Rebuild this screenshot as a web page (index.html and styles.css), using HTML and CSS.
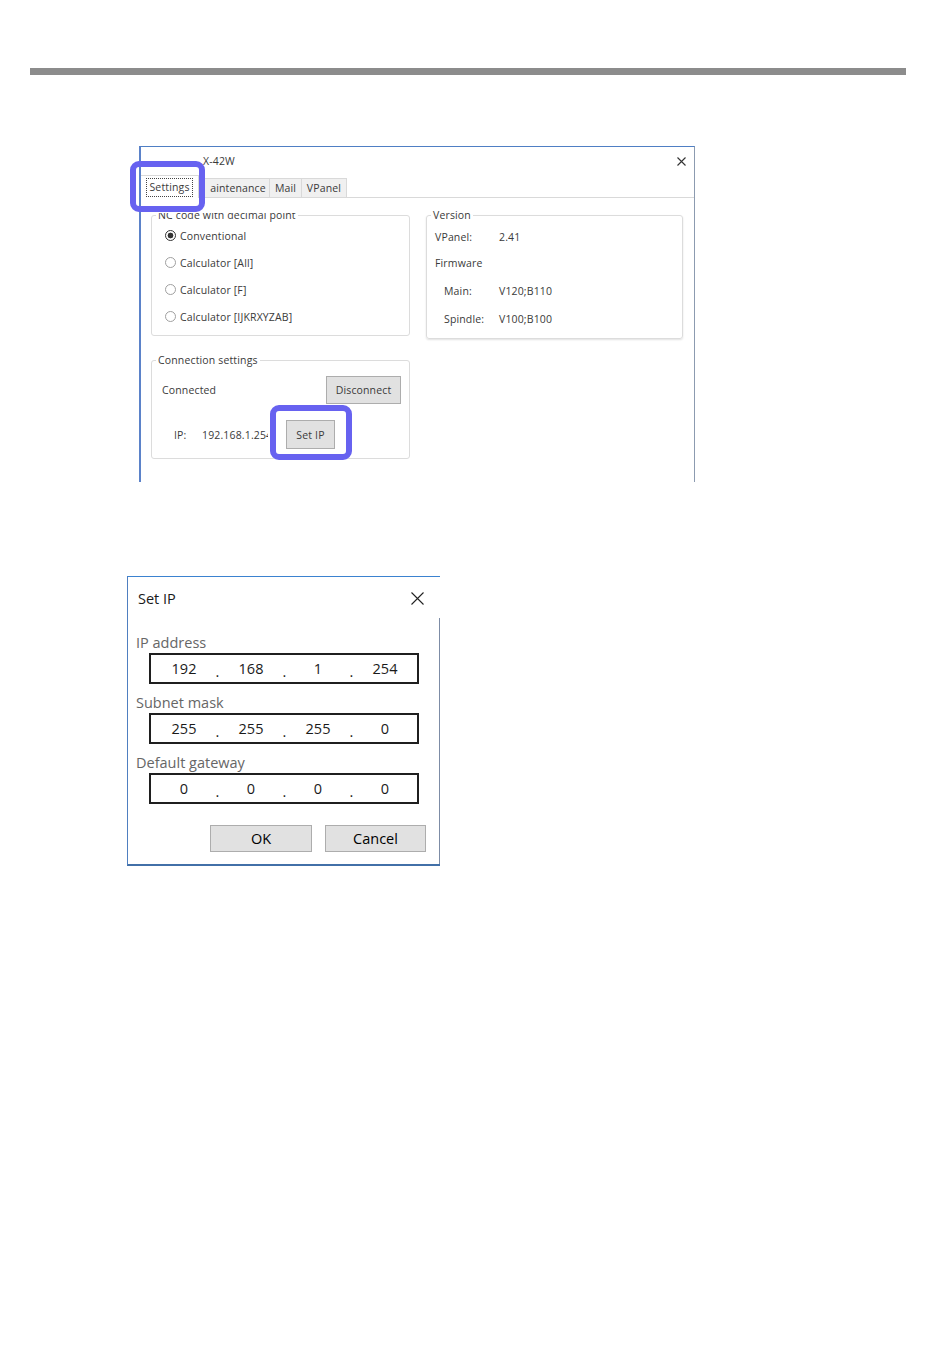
FILE: index.html
```html
<!DOCTYPE html>
<html>
<head>
<meta charset="utf-8">
<link rel="stylesheet" href="styles.css">
</head>
<body>
<div class="rule"></div>

<div class="win">
  <div class="titlebar">
    <span class="wtitle">X-42W</span>
    <svg class="wclose" width="9" height="9" viewBox="0 0 9 9"><path d="M0.5 0.5 L8.5 8.5 M8.5 0.5 L0.5 8.5" stroke="#333" stroke-width="1.1" fill="none"/></svg>
  </div>
  <div class="tabs">
    <div class="tab sel t1"><span class="focus">Settings</span></div>
    <div class="tab t2">aintenance</div>
    <div class="tab t3">Mail</div>
    <div class="tab t4">VPanel</div>
  </div>
  <div class="panel">
    <div class="col">
      <fieldset class="grp g1">
        <legend class="clip">NC code with decimal point</legend>
        <div class="radios">
          <div class="radio"><span class="dot on"></span>Conventional</div>
          <div class="radio"><span class="dot"></span>Calculator [All]</div>
          <div class="radio"><span class="dot"></span>Calculator [F]</div>
          <div class="radio"><span class="dot"></span>Calculator [IJKRXYZAB]</div>
        </div>
      </fieldset>
      <fieldset class="grp g2">
        <legend>Connection settings</legend>
        <div class="conn">
          <div class="crow1"><span>Connected</span><div class="wbtn disc">Disconnect</div></div>
          <div class="crow2"><span class="iplab">IP:</span><span class="ipval">192.168.1.254</span><div class="wbtn setip">Set IP</div></div>
        </div>
      </fieldset>
    </div>
    <fieldset class="grp ver">
      <legend>Version</legend>
      <div class="vgrid">
        <span class="vk">VPanel:</span><span>2.41</span>
        <span class="vk">Firmware</span><span></span>
        <span class="vk ind">Main:</span><span>V120;B110</span>
        <span class="vk ind">Spindle:</span><span>V100;B100</span>
      </div>
    </fieldset>
  </div>
  <div class="mark m1"></div>
  <div class="mark m2"></div>
</div>

<div class="dlg">
  <div class="dhead">
    <span class="dtitle">Set IP</span>
    <svg width="13" height="13" viewBox="0 0 13 13"><path d="M0.5 0.5 L12.5 12.5 M12.5 0.5 L0.5 12.5" stroke="#222" stroke-width="1.1" fill="none"/></svg>
  </div>
  <div class="dbody">
    <div class="flabel">IP address</div>
    <div class="ipbox"><span></span><span>192</span><span class="pt">.</span><span>168</span><span class="pt">.</span><span>1</span><span class="pt">.</span><span>254</span></div>
    <div class="flabel gap">Subnet mask</div>
    <div class="ipbox"><span></span><span>255</span><span class="pt">.</span><span>255</span><span class="pt">.</span><span>255</span><span class="pt">.</span><span>0</span></div>
    <div class="flabel gap">Default gateway</div>
    <div class="ipbox"><span></span><span>0</span><span class="pt">.</span><span>0</span><span class="pt">.</span><span>0</span><span class="pt">.</span><span>0</span></div>
  </div>
  <div class="dbtns">
    <div class="dbtn ok">OK</div>
    <div class="dbtn cancel">Cancel</div>
  </div>
</div>
</body>
</html>
```

FILE: styles.css
```css
body {
  margin: 0;
  background: #fff;
  font-family: "Open Sans", "Noto Sans", sans-serif;
}

.rule {
  margin: 68px 44px 0 30px;
  height: 7px;
  background: #8c8c8c;
}

/* ---------- first window ---------- */
.win {
  position: relative;
  margin: 71px 0 0 139px;
  width: 556px;
  height: 336px;
  box-sizing: border-box;
  border-left: 2px solid #5b82c9;
  border-top: 1px solid #4f7fc4;
  border-right: 1px solid #8c9bb0;
  font-size: 10.5px;
  letter-spacing: 0.15px;
  color: #3a3a3a;
}

.titlebar {
  height: 28px;
  display: flex;
  align-items: center;
  justify-content: space-between;
  padding: 0 8px 0 62px;
}

.wtitle { line-height: 12px; }

.tabs {
  height: 22px;
  display: flex;
  align-items: flex-end;
  border-bottom: 1px solid #d9d9d9;
}

.tab {
  height: 19px;
  box-sizing: border-box;
  border: 1px solid #d9d9d9;
  border-bottom: none;
  background: #f0f0f0;
  display: flex;
  align-items: center;
  justify-content: center;
  margin-left: -1px;
}

.tab.sel {
  height: 23px;
  margin-bottom: -1px;
  margin-left: 0;
  background: #fff;
  border-left: none;
}

.t1 { width: 58px; }
.t2 { width: 72px; padding-left: 8px; }
.t3 { width: 33px; }
.t4 { width: 46px; }

.focus {
  border: 1px dotted #444;
  padding: 2px 2px;
  line-height: 13px;
}

.panel {
  display: flex;
  gap: 16px;
  padding: 10px 0 0 10px;
}

.grp {
  margin: 0;
  padding: 0;
  border: 1px solid #dcdcdc;
  border-radius: 3px;
  box-sizing: border-box;
  min-width: 0;
}

.grp legend {
  margin-left: 4px;
  padding: 0 2px;
  line-height: 14px;
}

.clip { clip-path: inset(5px 0 0 0); }

.g1 { width: 259px; height: 128px; }
.g2 { width: 259px; height: 106px; margin-top: 17px; }
.ver { width: 257px; height: 131px; box-shadow: 0 1px 2px rgba(0,0,0,0.12); }

.radios { padding-top: 0; }

.radio {
  height: 27px;
  display: flex;
  align-items: center;
  gap: 4px;
  padding-left: 13px;
}

.dot {
  width: 11px;
  height: 11px;
  box-sizing: border-box;
  border: 1px solid #a0a0a0;
  border-radius: 50%;
  background: #fff;
}

.dot.on {
  border-color: #333;
  background: radial-gradient(circle, #333 0 2.6px, #fff 3.2px);
}

.conn { padding: 9px 8px 0 10px; }

.crow1 {
  height: 28px;
  display: flex;
  align-items: center;
  justify-content: space-between;
}

.crow2 {
  height: 29px;
  margin-top: 16px;
  display: flex;
  align-items: center;
  padding-left: 12px;
}

.iplab { width: 28px; }

.ipval {
  width: 66px;
  overflow: hidden;
  white-space: nowrap;
}

.wbtn {
  box-sizing: border-box;
  background: #e1e1e1;
  border: 1px solid #adadad;
  display: flex;
  align-items: center;
  justify-content: center;
}

.disc { width: 75px; height: 28px; }
.setip { width: 49px; height: 29px; margin-left: 18px; }

.vgrid {
  display: grid;
  grid-template-columns: 64px auto;
  grid-template-rows: 27px 26px 29px 28px;
  align-items: center;
  padding: 1px 0 0 8px;
}

.vk.ind { padding-left: 9px; }

.mark {
  position: absolute;
  box-sizing: border-box;
  border: 6px solid #6762f0;
  border-radius: 9px;
}

.m1 { left: -11px; top: 14px; width: 75px; height: 51px; }
.m2 { left: 129px; top: 258px; width: 82px; height: 55px; }

/* ---------- Set IP dialog ---------- */
.dlg {
  position: relative;
  margin: 94px 0 0 127px;
  width: 313px;
  height: 290px;
  box-sizing: border-box;
  border-top: 1px solid #3b82d0;
  border-left: 1px solid #4f7fc0;
  border-bottom: 2px solid #4270a8;
  font-size: 14.5px;
  color: #1a1a1a;
}

.dlg::after {
  content: "";
  position: absolute;
  right: 0;
  top: 41px;
  bottom: 0;
  width: 1px;
  background: #7d8ca6;
}

.dhead {
  height: 43px;
  display: flex;
  align-items: center;
  justify-content: space-between;
  padding: 0 16px 0 10px;
}

.dbody { padding: 13px 0 0 8px; }

.flabel {
  line-height: 20px;
  color: #666;
}

.flabel.gap { margin-top: 9px; }

.ipbox {
  margin-left: 13px;
  width: 270px;
  height: 31px;
  box-sizing: border-box;
  border: 2px solid #1f1f1f;
  display: grid;
  grid-template-columns: 8px 50px 17px 50px 17px 50px 17px 50px;
  align-items: center;
  text-align: center;
  line-height: 18px;
  padding-top: 1px;
}

.ipbox .pt { padding-top: 5px; }

.dbtns {
  margin-top: 21px;
  display: flex;
  justify-content: flex-end;
  gap: 13px;
  padding-right: 14px;
}

.dbtn {
  height: 27px;
  box-sizing: border-box;
  background: #e1e1e1;
  border: 1px solid #adadad;
  display: flex;
  align-items: center;
  justify-content: center;
  color: #000;
}

.ok { width: 102px; }
.cancel { width: 101px; }
```
